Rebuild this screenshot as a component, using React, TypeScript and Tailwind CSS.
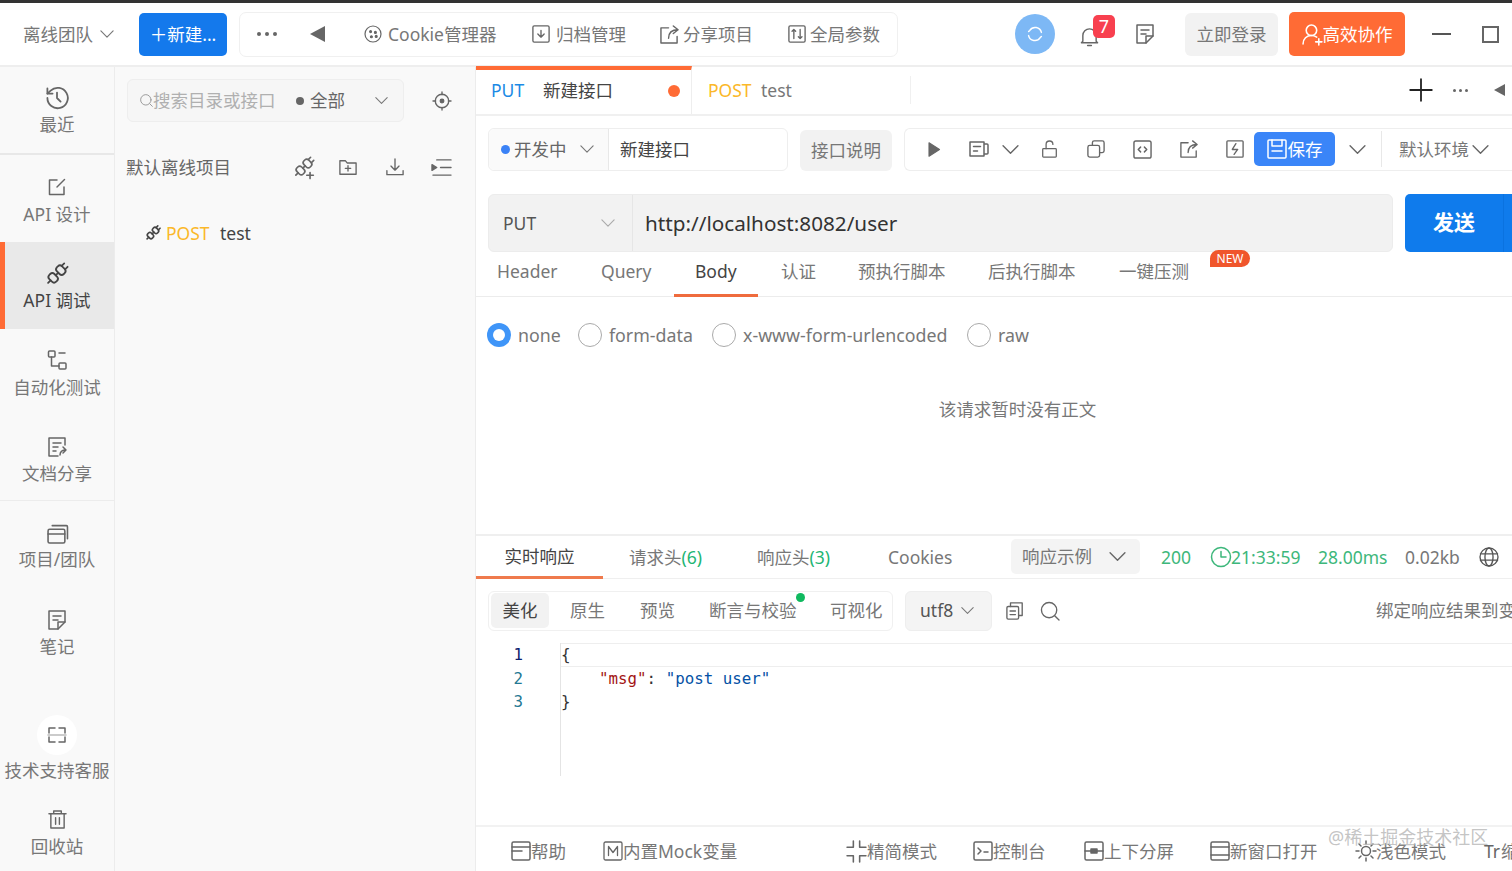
import type { ReactNode } from "react";

function Ico({ size = 18, color = "#666", sw = 1.5, children }: { size?: number; color?: string; sw?: number; children: ReactNode }) {
  return (
    <svg width={size} height={size} viewBox="2 2 20 20" fill="none" stroke={color} strokeWidth={sw} strokeLinecap="round" strokeLinejoin="round" className="shrink-0 overflow-visible">
      {children}
    </svg>
  );
}

function Chev({ size = 14, color = "#777" }: { size?: number; color?: string }) {
  return (
    <svg width={size} height={size} viewBox="0 0 16 16" fill="none" stroke={color} strokeWidth={1.3} strokeLinecap="round" strokeLinejoin="round" className="shrink-0">
      <path d="M1 4.500L8 11.500L15 4.500" />
    </svg>
  );
}

const plug = (
  <g transform="rotate(45 12 12)">
    <rect x="8" y="4.500" width="8" height="6" rx="2.500" />
    <rect x="8" y="13.500" width="8" height="6" rx="2.500" />
    <path d="M12 10.500v3M10 1.500v3M14 1.500v3M12 19.500v3" />
  </g>
);

function NavItem({ cls, label, active, children }: { cls: string; label: string; active?: boolean; children: ReactNode }) {
  return (
    <div className={`${cls} relative flex flex-col items-center text-[17.5px] leading-[26px] ${active ? "bg-[#e9e9e9] text-[#444]" : "text-[#777]"}`}>
      {active && <span className="absolute left-0 top-0 bottom-0 w-[5px] bg-[#ff6b35]" />}
      {children}
      <span className="whitespace-nowrap">{label}</span>
    </div>
  );
}

function Sidebar() {
  return (
    <div className="w-[115px] shrink-0 bg-[#f9f9f9] border-r border-[#ececec] flex flex-col">
      <NavItem cls="h-[88px] pt-[19px] gap-[1px] border-b-2 border-[#e8e8e8]" label="最近">
        <Ico size={24}><path d="M4 12a8.500 8.500 0 1 0 2.700-6.200L4 8.300" /><path d="M4 4v4.300h4.300M12 7.500V12l3 3" /></Ico>
      </NavItem>
      <NavItem cls="h-[87px] pt-[22px] gap-[4px]" label="API 设计">
        <Ico size={20}><path d="M19 12v7.500H4.500V5H12" /><path d="M19.500 4.500L12 12" /></Ico>
      </NavItem>
      <NavItem cls="h-[87px] pt-[20px] gap-[1px]" label="API 调试" active>
        <Ico size={24} color="#444">{plug}</Ico>
      </NavItem>
      <NavItem cls="h-[86px] pt-[21px] gap-[4px]" label="自动化测试">
        <Ico size={20}><rect x="3.500" y="3" width="6.500" height="6" rx="1" /><rect x="14" y="15" width="7" height="6" rx="1" /><path d="M6.500 9v9H14M14 5h6" /></Ico>
      </NavItem>
      <NavItem cls="h-[86px] pt-[22px] gap-[3px] border-b border-[#ececec]" label="文档分享">
        <Ico size={20}><path d="M20 10V3H4v18h9" /><path d="M8 8h8M8 12h5M8 16h3M15 20c0-3 2-5 6-5M18 12l3 3-3 3" /></Ico>
      </NavItem>
      <NavItem cls="h-[88px] pt-[22px] gap-[2px]" label="项目/团队">
        <Ico size={21}><rect x="3" y="8" width="16" height="13" rx="1.500" /><path d="M3 12.500h16M7 4.500h13.500a1 1 0 0 1 1 1V17" /></Ico>
      </NavItem>
      <NavItem cls="h-[86px] pt-[21px] gap-[3px]" label="笔记">
        <Ico size={20}><path d="M13 21H4V3h16v11z" /><path d="M8 8h8M8 12h5M13 21v-7h7" /></Ico>
      </NavItem>
      <div className="mt-[40px] flex flex-col items-center gap-[2px] text-[17.5px] leading-[26px] text-[#777]">
        <div className="w-[40px] h-[40px] rounded-full bg-white flex items-center justify-center">
          <Ico size={20} sw={1.500}><path d="M4 10V5h6M14 5h6v5M4 14v5h6M14 19h6v-5" /><path d="M3 12h18" stroke="#bbb" /></Ico>
        </div>
        <span className="whitespace-nowrap">技术支持客服</span>
      </div>
      <div className="mt-[27px] flex flex-col items-center gap-[4px] text-[17.5px] leading-[26px] text-[#777]">
        <Ico size={19}><path d="M3 6h18M8 6V3h8v3M5 6v15h14V6M10 10v7M14 10v7" /></Ico>
        <span>回收站</span>
      </div>
    </div>
  );
}

function ProjectPanel() {
  return (
    <div className="w-[361px] shrink-0 bg-[#f9f9f9] border-r border-[#ececec] pl-[12px] flex flex-col">
      <div className="mt-[12px] h-[43px] flex items-center">
        <div className="w-[277px] h-[43px] rounded-[6px] bg-[#f6f6f6] border border-[#eeeeee] flex items-center pl-[12px] text-[17.5px]">
          <Ico size={13} color="#999"><circle cx="11" cy="11" r="8" /><path d="M17 17l4 4" /></Ico>
          <span className="text-[#b0b0b0] w-[121px] whitespace-nowrap">搜索目录或接口</span>
          <span className="ml-[22px] w-[8px] h-[8px] rounded-full bg-[#666]" />
          <span className="ml-[6px] text-[#666] w-[35px] whitespace-nowrap">全部</span>
          <span className="ml-[30px]"><Chev size={13} /></span>
        </div>
        <span className="ml-[29px]">
          <Ico size={18}><circle cx="12" cy="12" r="7.500" /><circle cx="12" cy="12" r="2" fill="#666" /><path d="M12 2v3M12 19v3M2 12h3M19 12h3" /></Ico>
        </span>
      </div>
      <div className="mt-[23px] -ml-[1px] h-[44px] flex items-center text-[17.5px] text-[#666]">
        <span className="w-[167px] whitespace-nowrap">默认离线项目</span>
        <Ico size={22}>{plug}<path d="M17.500 17v5.500M14.500 19.500h6" /></Ico>
        <span className="ml-[24px]"><Ico size={18}><path d="M3 5h6l2 2.500h10V20H3z" /><path d="M12 10.500v6M9 13.500h6" /></Ico></span>
        <span className="ml-[29px]"><Ico size={18}><path d="M12 3v12M7.500 11l4.500 4.500 4.500-4.500M3 16v4.500h18V16" /></Ico></span>
        <span className="ml-[28px]"><Ico size={19}><path d="M7 4h15M11 12h11M3 20h19" /><path d="M2 9l5 3-5 3z" fill="#666" /></Ico></span>
      </div>
      <div className="mt-[31px] ml-[18px] h-[26px] flex items-center text-[17.5px]">
        <Ico size={16} color="#444" sw={2}>{plug}</Ico>
        <span className="ml-[5px] w-[54px] text-[#fbb829]">POST</span>
        <span className="text-[#444]">test</span>
      </div>
    </div>
  );
}

function TabBar() {
  return (
    <div className="-mt-[1px] h-[50px] shrink-0 border-b-2 border-[#f0f0f0] flex items-stretch text-[17.5px]">
      <div className="w-[216px] border-t-[4px] border-[#ff6b35] border-r border-r-[#eeeeee] flex items-center pl-[15px] pb-[3px]">
        <span className="w-[52px] text-[#1a8ae5]">PUT</span>
        <span className="w-[125px] text-[#444] whitespace-nowrap">新建接口</span>
        <span className="w-[12px] h-[12px] rounded-full bg-[#ff6b35]" />
      </div>
      <div className="w-[218px] flex items-center pl-[16px]">
        <span className="w-[53px] text-[#fbb829]">POST</span>
        <span className="text-[#777]">test</span>
      </div>
      <div className="my-[10px] w-px bg-[#f0f0f0]" />
      <div className="ml-auto flex items-center">
        <Ico size={24} color="#222" sw={1.500}><path d="M12 3v18M3 12h18" /></Ico>
        <span className="ml-[20px] flex gap-[3px]">
          <i className="w-[3px] h-[3px] rounded-full bg-[#666]" /><i className="w-[3px] h-[3px] rounded-full bg-[#666]" /><i className="w-[3px] h-[3px] rounded-full bg-[#666]" />
        </span>
        <span className="ml-[26px] w-0 h-0 border-y-[6px] border-y-transparent border-r-[11px] border-r-[#666] mr-[7px]" />
      </div>
    </div>
  );
}

function ApiToolbar() {
  return (
    <div className="mt-[11px] ml-[12px] h-[44px] flex items-center text-[17.5px]">
      <div className="w-[300px] h-[43px] rounded-[6px] border border-[#eeeeee] flex shrink-0">
        <div className="w-[120px] bg-[#fafafa] border-r border-[#e8e8e8] rounded-l-[6px] flex items-center pl-[12px] text-[#666]">
          <span className="w-[9px] h-[9px] rounded-full bg-[#3b82f6]" />
          <span className="ml-[4px] w-[66px] whitespace-nowrap">开发中</span>
          <Chev size={14} />
        </div>
        <div className="flex items-center pl-[11px] text-[#444]">新建接口</div>
      </div>
      <div className="ml-[12px] w-[92px] h-[41px] mt-[2px] shrink-0 rounded-[6px] bg-[#f2f2f2] text-[#777] flex items-center justify-center">接口说明</div>
      <div className="ml-[12px] flex-1 h-[43px] rounded-l-[6px] border border-r-0 border-[#eeeeee] flex items-center pl-[21px]">
        <Ico size={15} color="#666"><path d="M6 3l14 9-14 9z" fill="#666" /></Ico>
        <span className="ml-[28px]"><Ico size={20}><path d="M17 5H3v14h14zM17 7h3a1 1 0 0 1 1 1v8a1 1 0 0 1-1 1h-3M6.500 9.500h7M6.500 14h4" /></Ico></span>
        <span className="ml-[13px]"><Chev size={17} color="#666" /></span>
        <span className="ml-[22px]"><Ico size={17}><rect x="4" y="11" width="16" height="10" rx="1" /><path d="M8 11V6a4 4 0 0 1 8 0" /></Ico></span>
        <span className="ml-[29px]"><Ico size={18}><rect x="3" y="8" width="13" height="13" rx="2" /><path d="M8 8V5a2 2 0 0 1 2-2h9a2 2 0 0 1 2 2v9a2 2 0 0 1-2 2h-3" /></Ico></span>
        <span className="ml-[28px]"><Ico size={19}><rect x="3" y="3" width="18" height="18" rx="2" /><path d="M10 9.500L7.500 12l2.500 2.500M14 9.500l2.500 2.500-2.500 2.500" /></Ico></span>
        <span className="ml-[28px]"><Ico size={18}><path d="M20 14v7H3V5h8M21 7l-5-4M21 7l-5 4M21 7c-6 0-10 3-10 9" /></Ico></span>
        <span className="ml-[28px]"><Ico size={18}><rect x="3" y="3" width="18" height="18" rx="1" /><path d="M13 6l-4 6.500h6L11 18" /></Ico></span>
        <div className="ml-[10px] w-[81px] h-[34px] rounded-[5px] bg-[#3a85f8] text-white flex items-center justify-center gap-[1px] shrink-0">
          <Ico size={20} color="#fff"><rect x="3" y="3" width="18" height="18" rx="1" /><path d="M7 3v6h10V3M7 14h10" /></Ico>
          <span className="whitespace-nowrap">保存</span>
        </div>
        <span className="ml-[14px]"><Chev size={17} color="#666" /></span>
        <div className="ml-[15px] w-px h-[36px] bg-[#e8e8e8]" />
        <span className="ml-[17px] w-[72px] text-[#777] whitespace-nowrap">默认环境</span>
        <span className="ml-[1px]"><Chev size={17} color="#666" /></span>
      </div>
    </div>
  );
}

function UrlBar() {
  return (
    <div className="mt-[23px] ml-[12px] flex h-[58px] shrink-0">
      <div className="w-[905px] rounded-[6px] bg-[#f2f2f2] border border-[#ececec] flex items-center shrink-0">
        <div className="w-[144px] h-full border-r border-[#e6e6e6] flex items-center pl-[14px] text-[17.5px] text-[#555]">
          <span className="w-[98px]">PUT</span>
          <Chev size={14} color="#aaa" />
        </div>
        <span className="pl-[12px] pt-[2px] text-[20.700px] text-[#333]">http://localhost:8082/user</span>
      </div>
      <div className="ml-[12px] flex-1 rounded-l-[5px] bg-[#0f7bec] flex items-center pl-[28px]">
        <span className="text-[21px] font-bold text-white">发送</span>
        <span className="ml-auto mr-[8px] w-px h-full bg-[#0a72e0]" />
      </div>
    </div>
  );
}

function BodyTabs() {
  return (
    <div className="relative h-[45px] shrink-0 border-b border-[#ececec] flex text-[17.5px] text-[#777]">
      <div className="w-[104px] pl-[21px] pt-[6px]">Header</div>
      <div className="w-[94px] pl-[21px] pt-[6px]">Query</div>
      <div className="w-[84px] pl-[21px] pt-[6px] text-[#444] border-b-[3px] border-[#ef6b3d] h-[45px]">Body</div>
      <div className="w-[100px] pl-[23px] pt-[6px]">认证</div>
      <div className="w-[130px] pt-[6px] whitespace-nowrap">预执行脚本</div>
      <div className="w-[131px] pt-[6px] whitespace-nowrap">后执行脚本</div>
      <div className="pt-[6px] whitespace-nowrap">一键压测</div>
      <span className="absolute left-[734px] -top-[2px] w-[40px] h-[17px] rounded-t-[9px] rounded-br-[9px] bg-[#f0562c] text-white text-[12px] leading-[17px] text-center">NEW</span>
    </div>
  );
}

function Radio({ label, checked, w }: { label: string; checked?: boolean; w: string }) {
  return (
    <div className={`${w} flex items-center shrink-0`}>
      <span className={`w-[24px] h-[24px] rounded-full flex items-center justify-center ${checked ? "bg-[#3f95f8]" : "border border-[#aaaaaa]"}`}>
        {checked && <span className="w-[12px] h-[12px] rounded-full bg-white" />}
      </span>
      <span className="ml-[7px] text-[#777] whitespace-nowrap">{label}</span>
    </div>
  );
}

function ResponseTabs() {
  return (
    <div className="h-[45px] shrink-0 border-t-2 border-b border-[#efefef] flex text-[17.5px] text-[#777]">
      <div className="w-[127px] flex items-center justify-center text-[#444] border-b-[3px] border-[#ef7a4d] h-[43px]">实时响应</div>
      <div className="ml-[26px] w-[128px] flex items-center whitespace-nowrap">请求头<span className="text-[#22b573]">(6)</span></div>
      <div className="w-[131px] flex items-center whitespace-nowrap">响应头<span className="text-[#22b573]">(3)</span></div>
      <div className="w-[123px] flex items-center">Cookies</div>
      <div className="mt-[3px] w-[129px] h-[35px] rounded-[5px] bg-[#f4f4f4] flex items-center pl-[11px]">
        <span className="w-[87px] whitespace-nowrap">响应示例</span>
        <Chev size={17} color="#666" />
      </div>
      <div className="ml-[21px] w-[50px] flex items-center text-[#3db77b]">200</div>
      <div className="w-[107px] flex items-center text-[#3db77b]">
        <Ico size={20} color="#3db77b"><circle cx="12" cy="12" r="9.500" /><path d="M12 6.500V12h5" /></Ico>
        <span>21:33:59</span>
      </div>
      <div className="w-[87px] flex items-center text-[#3db77b]">28.00ms</div>
      <div className="w-[75px] flex items-center">0.02kb</div>
      <div className="flex items-center">
        <Ico size={18} color="#555"><circle cx="12" cy="12" r="10" /><ellipse cx="12" cy="12" rx="4.500" ry="10" /><path d="M2.500 8.500h19M2.500 15.500h19" /></Ico>
      </div>
    </div>
  );
}

function ResponseBar() {
  return (
    <div className="mt-[11px] ml-[12px] h-[41px] shrink-0 flex items-center text-[17.5px] text-[#777]">
      <div className="w-[405px] h-[40px] shrink-0 rounded-[6px] border border-[#f0f0f0] flex items-center pl-[2px]">
        <div className="w-[58px] h-[35px] rounded-[5px] bg-[#f2f2f2] text-[#444] flex items-center justify-center">美化</div>
        <span className="ml-[21px] w-[70px]">原生</span>
        <span className="w-[69px]">预览</span>
        <span className="relative w-[121px] whitespace-nowrap">
          断言与校验
          <i className="absolute left-[87px] -top-[4px] w-[9px] h-[9px] rounded-full bg-[#10b95f]" />
        </span>
        <span className="whitespace-nowrap">可视化</span>
      </div>
      <div className="ml-[12px] w-[87px] h-[40px] shrink-0 rounded-[6px] bg-[#f4f4f4] border border-[#eeeeee] flex items-center pl-[14px] text-[#555]">
        <span className="w-[41px]">utf8</span>
        <Chev size={13} />
      </div>
      <span className="ml-[14px] shrink-0"><Ico size={18}><rect x="3" y="7" width="13" height="14" rx="1.500" /><path d="M7 7V3h13v14h-4M6.500 12h6M6.500 16h6" /></Ico></span>
      <span className="ml-[17px] shrink-0"><Ico size={18}><circle cx="11" cy="11" r="8.500" /><path d="M17.500 17.500L22 22" /></Ico></span>
      <span className="ml-[317px] shrink-0 whitespace-nowrap">绑定响应结果到变量</span>
    </div>
  );
}

function CodeView() {
  const mono = "font-['DejaVu_Sans_Mono',monospace] text-[15.800px] leading-[23.500px]";
  return (
    <div className={`mt-[12px] h-[133px] shrink-0 flex ${mono}`}>
      <div className="w-[84px] shrink-0 pr-[37px] text-right text-[#237893]">
        <div className="text-[#0b216f]">1</div>
        <div>2</div>
        <div>3</div>
      </div>
      <div className="flex-1 border-l border-[#e4e4e4]">
        <div className="h-[23.500px] border-y border-[#eeeeee] text-[#333] whitespace-pre leading-[21px]">{"{"}</div>
        <div className="whitespace-pre text-[#333]">
          {"    "}
          <span className="text-[#a31515]">"msg"</span>: <span className="text-[#0451a5]">"post user"</span>
        </div>
        <div className="text-[#333]">{"}"}</div>
      </div>
    </div>
  );
}

function Foot({ w, label, children }: { w: string; label: string; children: ReactNode }) {
  return (
    <div className={`${w} shrink-0 flex items-center whitespace-nowrap`}>
      {children}
      <span>{label}</span>
    </div>
  );
}

function Footer() {
  return (
    <div className="mt-auto h-[46px] shrink-0 border-t-2 border-[#f2f2f2] flex items-center pl-[35px] pt-[4px] text-[17.5px] text-[#777]">
      <Foot w="w-[92px]" label="帮助"><Ico size={20}><rect x="3" y="3" width="18" height="18" rx="1.500" /><path d="M3 8h18M3 12h10" /></Ico></Foot>
      <Foot w="w-[243px]" label="内置Mock变量"><Ico size={20} sw={1.300}><rect x="3" y="3" width="18" height="18" rx="1.500" /><path d="M7.500 16.500v-9l4.500 6 4.500-6v9" /></Ico></Foot>
      <Foot w="w-[127px]" label="精简模式"><Ico size={21}><path d="M9 2v6H3M15 2v6h6M9 22v-6H3M15 22v-6h6" /></Ico></Foot>
      <Foot w="w-[111px]" label="控制台"><Ico size={20}><rect x="3" y="3" width="18" height="18" rx="1.500" /><path d="M7 9l3 3-3 3M13 13h4" /></Ico></Foot>
      <Foot w="w-[126px]" label="上下分屏"><Ico size={20}><rect x="3" y="3" width="18" height="18" rx="1.500" /><path d="M3 12h18" /><rect x="9" y="10" width="6" height="4" fill="#666" /></Ico></Foot>
      <Foot w="w-[146px]" label="新窗口打开"><Ico size={20}><rect x="3" y="3" width="18" height="18" rx="1.500" /><path d="M3 8h18M3 16h18" /></Ico></Foot>
      <Foot w="w-[128px]" label="浅色模式"><Ico size={20}><circle cx="12" cy="12" r="4.500" /><path d="M12 2v3M12 19v3M2 12h3M19 12h3M5 5l2 2M17 17l2 2M5 19l2-2M17 7l2-2" /></Ico></Foot>
      <Foot w="w-[60px]" label="缩放"><span className="text-[#666] mr-[1px]">Tr</span></Foot>
    </div>
  );
}

export default function App() {
  return (
    <div className="relative w-[1512px] h-[871px] overflow-hidden bg-white flex flex-col font-['Noto_Sans','Noto_Sans_CJK_SC',sans-serif]">
      <div className="h-[3px] shrink-0 bg-[#333333]" />
      <header className="h-[64px] shrink-0 border-b-2 border-[#eeeeee] flex items-center text-[17.5px] text-[#777]">
        <span className="ml-[23px] w-[76px] whitespace-nowrap">离线团队</span>
        <span className="ml-[1px]"><Chev size={14} /></span>
        <button className="ml-[25px] w-[88px] h-[43px] rounded-[5px] bg-[#1479ec] text-white whitespace-nowrap">＋新建...</button>
        <div className="ml-[12px] w-[659px] h-[45px] rounded-[7px] border border-[#f0f0f0] flex items-center pl-[17px]">
          <span className="flex gap-[4px]">
            <i className="w-[4px] h-[4px] rounded-full bg-[#666]" /><i className="w-[4px] h-[4px] rounded-full bg-[#666]" /><i className="w-[4px] h-[4px] rounded-full bg-[#666]" />
          </span>
          <span className="ml-[33px] w-0 h-0 border-y-[8px] border-y-transparent border-r-[15px] border-r-[#666]" />
          <span className="ml-[40px]"><Ico size={16}><circle cx="12" cy="12" r="10" /><circle cx="9" cy="9" r="1.200" fill="#666" /><circle cx="15" cy="10" r="1.200" fill="#666" /><circle cx="10" cy="15.500" r="1.200" fill="#666" /><circle cx="16" cy="15" r="1.200" fill="#666" /></Ico></span>
          <span className="ml-[7px] w-[144px] whitespace-nowrap">Cookie管理器</span>
          <Ico size={18}><rect x="3" y="3" width="18" height="18" rx="1.500" /><path d="M12 8v7M8.500 12l3.500 3.500 3.500-3.500" /></Ico>
          <span className="ml-[6px] w-[104px] whitespace-nowrap">归档管理</span>
          <Ico size={19}><path d="M20 14v7H3V5h8M21 7l-5-4M21 7l-5 4M21 7c-6 0-10 3-10 9" /></Ico>
          <span className="ml-[4px] w-[105px] whitespace-nowrap">分享项目</span>
          <Ico size={18}><rect x="3" y="3" width="18" height="18" rx="1.500" /><path d="M8.500 7v10M6.500 9l2-2 2 2M15.500 7v10M13.500 15l2 2 2-2" /></Ico>
          <span className="ml-[4px] whitespace-nowrap">全局参数</span>
        </div>
        <div className="ml-[117px] w-[40px] h-[40px] rounded-full bg-[#7db8f5] flex items-center justify-center">
          <Ico size={16} color="#fff" sw={1.800}><path d="M20 10a8 8 0 0 0-14.500-2.500L4 9M4 14a8 8 0 0 0 14.500 2.500L20 15" /></Ico>
        </div>
        <div className="relative ml-[25px] w-[20px] h-[24px] flex items-end">
          <Ico size={19}><path d="M5 17V11a7 7 0 0 1 14 0v6l1.500 1.500h-17zM10 21.500h4" /></Ico>
          <span className="absolute left-[13px] -top-[7px] w-[22px] h-[23px] rounded-[5px] bg-[#f8404f] text-white text-[18px] leading-[22px] text-center">7</span>
        </div>
        <span className="ml-[35px]"><Ico size={20}><path d="M13 21H4V3h16v11z" /><path d="M8 8h8M8 12h5M13 21v-7h7" /></Ico></span>
        <div className="ml-[30px] w-[93px] h-[43px] rounded-[6px] bg-[#f2f2f2] flex items-center justify-center whitespace-nowrap">立即登录</div>
        <div className="ml-[11px] w-[116px] h-[44px] rounded-[5px] bg-[#ff6b35] text-white flex items-center justify-center whitespace-nowrap">
          <Ico size={21} color="#fff"><circle cx="11" cy="8" r="5" /><path d="M3 21c0-5 3.500-8 8-8 2 0 3.500.5 5 1.500M15 19h6M18 16v6" /></Ico>
          <span>高效协作</span>
        </div>
        <span className="ml-[27px] w-[19px] h-[2px] bg-[#555]" />
        <span className="ml-[31px] w-[17px] h-[17px] border-2 border-[#666]" />
      </header>
      <div className="flex-1 min-h-0 flex">
        <Sidebar />
        <ProjectPanel />
        <main className="flex-1 min-w-0 flex flex-col">
          <TabBar />
          <ApiToolbar />
          <UrlBar />
          <BodyTabs />
          <div className="mt-[25px] ml-[11px] h-[26px] shrink-0 flex items-center text-[17.800px]">
            <Radio label="none" checked w="w-[91px]" />
            <Radio label="form-data" w="w-[134px]" />
            <Radio label="x-www-form-urlencoded" w="w-[255px]" />
            <Radio label="raw" w="w-[80px]" />
          </div>
          <div className="mt-[48px] h-[26px] shrink-0 text-center pl-[47px] text-[17.5px] leading-[26px] text-[#777]">该请求暂时没有正文</div>
          <div className="mt-[112px]"><ResponseTabs /></div>
          <ResponseBar />
          <CodeView />
          <Footer />
        </main>
      </div>
      <span className="absolute left-[1328px] top-[824px] text-[18px] text-[#b5b5b5]/80 whitespace-nowrap">@稀土掘金技术社区</span>
    </div>
  );
}
